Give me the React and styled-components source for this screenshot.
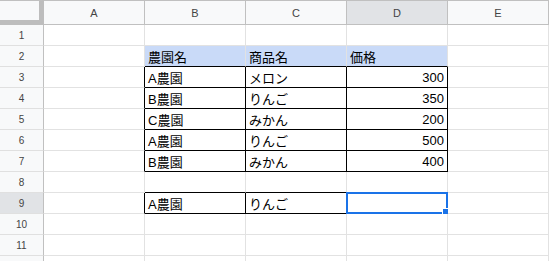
import React from 'react';
import styled, { createGlobalStyle } from 'styled-components';

const GlobalStyle = createGlobalStyle`
  body {
    margin: 0;
    background: #fff;
    overflow: hidden;
    font-family: "Liberation Sans", "Noto Sans CJK JP", sans-serif;
  }
`;

const COLS = ['A', 'B', 'C', 'D', 'E'];
const ROW_COUNT = 11;
const ACTIVE = { row: 9, col: 'D' };

const GRID_LINE = '#e2e2e2';
const HEAD_LINE = '#c0c0c0';

const CELLS = {
  B2: '農園名', C2: '商品名', D2: '価格',
  B3: 'A農園', C3: 'メロン', D3: 300,
  B4: 'B農園', C4: 'りんご', D4: 350,
  B5: 'C農園', C5: 'みかん', D5: 200,
  B6: 'A農園', C6: 'りんご', D6: 500,
  B7: 'B農園', C7: 'みかん', D7: 400,
  B9: 'A農園', C9: 'りんご'
};

const FILLED = ['B2', 'C2', 'D2'];

const BOXED = [
  'B3', 'C3', 'D3', 'B4', 'C4', 'D4', 'B5', 'C5', 'D5',
  'B6', 'C6', 'D6', 'B7', 'C7', 'D7', 'B9', 'C9'
];

const key = (c, r) => `${COLS[c] || ''}${r}`;
const isBoxed = (c, r) => BOXED.includes(key(c, r));

const Sheet = styled.div`
  display: grid;
  grid-template-columns: 44px repeat(5, 101px);
  grid-template-rows: 25px;
  grid-auto-rows: 21px;
  width: 549px;
  height: 261px;
  overflow: hidden;
`;

const Corner = styled.div`
  box-sizing: border-box;
  background: #f8f9fa;
  border-top: 1px solid ${HEAD_LINE};
  border-right: 5px solid #bdbdbd;
  border-bottom: 5px solid #bdbdbd;
`;

const ColHead = styled.div`
  box-sizing: border-box;
  display: flex;
  align-items: center;
  justify-content: center;
  background: ${(p) => (p.$active ? '#e1e3e6' : '#f8f9fa')};
  border-top: 1px solid ${HEAD_LINE};
  border-right: 1px solid ${HEAD_LINE};
  border-bottom: 1px solid ${HEAD_LINE};
  color: #444;
  font-size: 11px;
`;

const RowHead = styled.div`
  box-sizing: border-box;
  display: flex;
  align-items: center;
  justify-content: center;
  background: ${(p) => (p.$active ? '#e1e3e6' : '#f8f9fa')};
  border-right: 1px solid ${HEAD_LINE};
  border-bottom: 1px solid #e0e0e0;
  color: #444;
  font-size: 10px;
`;

const Cell = styled.div`
  position: relative;
  box-sizing: border-box;
  display: flex;
  align-items: center;
  justify-content: ${(p) => (p.$number ? 'flex-end' : 'flex-start')};
  padding: 1px 3px 0;
  background: ${(p) => (p.$filled ? '#c9daf8' : '#fff')};
  border-right: 1px solid ${(p) => p.$right};
  border-bottom: 1px solid ${(p) => p.$bottom};
  color: #000;
  font-size: 13px;
  white-space: nowrap;
`;

const Selection = styled.div`
  position: absolute;
  top: -1px;
  left: -1px;
  right: -1px;
  bottom: -1px;
  border: 2px solid #1a73e8;
  pointer-events: none;
`;

const Handle = styled.div`
  position: absolute;
  right: -4px;
  bottom: -4px;
  width: 6px;
  height: 6px;
  background: #1a73e8;
  border: 1px solid #fff;
`;

const App = () => {
  const rows = Array.from({ length: ROW_COUNT }, (_, i) => i + 1);

  return (
    <>
      <GlobalStyle />
      <Sheet>
        <Corner />
        {COLS.map((c) => (
          <ColHead key={c} $active={c === ACTIVE.col}>{c}</ColHead>
        ))}
        {rows.map((r) => (
          <React.Fragment key={r}>
            <RowHead $active={r === ACTIVE.row}>{r}</RowHead>
            {COLS.map((c, ci) => {
              const id = key(ci, r);
              const value = CELLS[id];
              const right = isBoxed(ci, r) || isBoxed(ci + 1, r) ? '#000' : GRID_LINE;
              const bottom = isBoxed(ci, r) || isBoxed(ci, r + 1) ? '#000' : GRID_LINE;
              const selected = c === ACTIVE.col && r === ACTIVE.row;
              return (
                <Cell
                  key={id}
                  $filled={FILLED.includes(id)}
                  $number={typeof value === 'number'}
                  $right={right}
                  $bottom={bottom}
                >
                  {value}
                  {selected && (
                    <Selection>
                      <Handle />
                    </Selection>
                  )}
                </Cell>
              );
            })}
          </React.Fragment>
        ))}
        {/* next row, only its top few pixels are in view */}
        <RowHead />
        {COLS.map((c) => (
          <Cell key={`${c}-next`} $right={GRID_LINE} $bottom={GRID_LINE} />
        ))}
      </Sheet>
    </>
  );
};

export default App;
